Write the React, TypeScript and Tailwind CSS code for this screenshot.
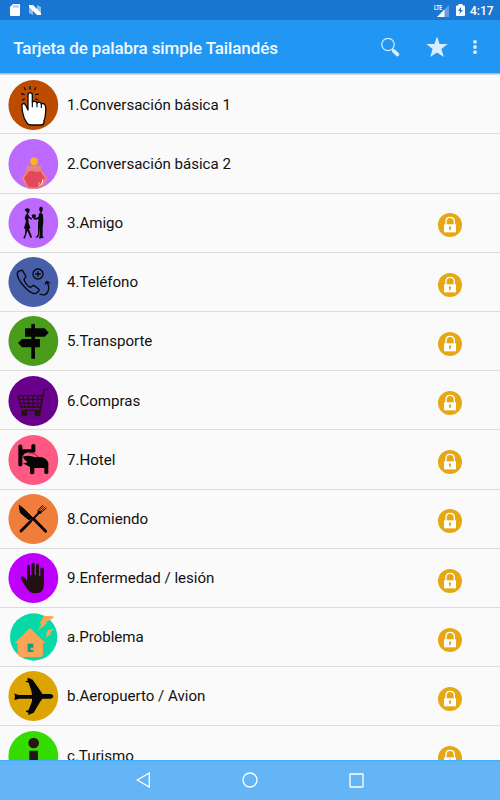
import type { ReactNode } from 'react';

type Item = { label: string; color: string; icon: ReactNode; locked?: boolean; small?: boolean };

const tap = (
  <g strokeLinecap="butt" strokeLinejoin="round">
    <path d="M65 18v11M47 22l5 9M83 22l-5 9M38 41l11 3M92 42l-11 2M41 61l9-5M90 61l-9-5" stroke="#0b0b0b" strokeWidth="3.5" />
    <path d="M59 82V45Q59 38 65.5 38Q72 38 72 45V66Q75 63 80 64Q85 65 86 69Q90 65 95 67Q99 69 99 72Q106 68 110 75Q113 80 112 95Q111 115 107 121V127Q106 135 98 135H68Q58 135 54 126Q46 115 43 98Q40 80 41 74Q45 67 51 74Q54 79 59 90Z" fill="#fff" stroke="#0b0b0b" strokeWidth="4" />
    <path d="M72 65v17M86 69v13M99 72v12" stroke="#0b0b0b" strokeWidth="3.5" />
  </g>
);

const perfume = (
  <g>
    <path d="M55 80H98V97H55Z" fill="#e98580" />
    <path d="M57 90L39 118L58 153H99L118 118L98 90Z" fill="#ea8080" />
    <path d="M60 98Q68 94 77 97Q87 100 96 97L110 118L95 145H61L47 118Z" fill="#e3495a" />
    <path d="M104 121L100 135L91 142" stroke="#fff" strokeWidth="3" fill="none" />
    <path d="M94 130l-4 7" stroke="#fff" strokeWidth="2" />
    <path d="M77 54l11 6v12l-6 7H72l-6-7V60z" fill="#f7b326" />
  </g>
);

const couple = (
  <g fill="#090909">
    <path d="M51 33Q58 28 64 34L63 42L59 47L62 55L72 62L70 65L60 60L61 75L66 89L62 94L71 117L67 121L57 98L51 118L49 122L45 119L50 109L51 94L47 90L53 70L49 60L52 51L57 46L54 41L49 36Z" />
    <path d="M93 29Q98 23 103 29V37L99 44L104 50L105 72L103 88L103 114L106 119L92 122L94 112L95 88L92 112L89 118L81 120L89 109L89 75L91 64L78 65L75 62L90 57L92 47L97 43L93 38Z" />
    <path d="M70 52Q77 45 83 52Q84 59 77 62L72 59Z" />
  </g>
);

const phone = (
  <g fill="none" stroke="#07090d" strokeWidth="4" strokeLinejoin="round" strokeLinecap="round">
    <path d="M30 43L39 40Q42 39 44 43L52 57Q54 61 50 63L47 67Q51 83 66 91L72 87Q75 84 79 87L91 96Q94 99 91 103L83 109Q75 113 58 99Q36 80 28 58Q25 48 30 43Z" />
    <circle cx="89" cy="51" r="15" />
    <path d="M82 51h14M89 44v14" />
    <path d="M95 111Q111 119 119 103Q125 89 115 75M111 81L115 73L124 78" />
  </g>
);

const signs = (
  <g fill="#050505">
    <path d="M69 128V25Q75 21 80 25V128Z" />
    <path d="M50 37H109L121 50L109 62H50Z" />
    <path d="M95 69H41L29 81L41 94H95Z" />
  </g>
);

const cart = (
  <g fill="none" stroke="#24130f" strokeWidth="4">
    <path d="M120 40H107L96 103H39M29 59H101M32 70H101M34 82H99M36 93H97M29 59L38 94M44 59L49 94M59 59L61 94M74 59V94M89 59L86 94" />
    <path d="M103 57L96 103" strokeWidth="5" />
    <circle cx="48" cy="112" r="9.5" fill="#24130f" stroke="none" />
    <circle cx="88" cy="112" r="9.5" fill="#24130f" stroke="none" />
  </g>
);

const bed = (
  <g fill="#050505">
    <path d="M30 32Q36 25 42 32V43H69V31Q75 24 81 30V52Q70 53 60 52L48 56L42 65V91Q35 98 30 91Z" />
    <path d="M43 65Q62 59 80 67Q112 62 120 83V114Q114 121 108 114V99H78V115Q71 121 65 115V96L42 84Q52 86 57 80Q48 75 43 65Z" />
    <path d="M61 54Q80 52 89 66" fill="none" stroke="#171012" strokeWidth="2" />
  </g>
);

const cutlery = (
  <g stroke="#080808" strokeLinecap="round" fill="none">
    <path d="M65 84L38 111" strokeWidth="8.5" />
    <path d="M62 87L94 54" strokeWidth="5.5" />
    <path d="M76 75L112 112" strokeWidth="8.5" />
    <path d="M33 35L36 56L61 77L75 73L47 45Z" fill="#080808" strokeWidth="3" />
    <path d="M89 49L102 35M96 57L114 42" strokeWidth="3" />
    <path d="M92 52L106 37M94 55L110 39" strokeWidth="2" />
    <path d="M89 50Q86 63 97 58L100 55Z" fill="#080808" />
  </g>
);

const palm = (
  <path d="M56 84V41Q56 35 60 35Q65 35 65 41V66H69V34Q69 29 74 29Q79 29 79 34V66H83V37Q83 32 88 32Q92 33 92 38V69H96V48Q97 43 102 44Q107 44 107 50V94Q107 121 82 121Q65 122 55 106L38 79Q36 71 43 70Q48 71 56 84Z" fill="#21120f" />
);

const house = (
  <g fill="#fba456">
    <path d="M65 48L111 93H104V127L99 135H34L28 126V93H19Z" />
    <path d="M58 95H75V120H58Z" fill="#119d83" />
    <path d="M67 107h8v7H67z" fill="#fba456" />
    <path d="M107 11L132 13L138 16L111 32L117 34L87 56L100 37L94 34Z" />
    <path d="M116 55L137 50L126 62L131 63L110 80L117 68L111 66L119 57Z" />
  </g>
);

const plane = (
  <path d="M18 67L23 70L33 72H71L69 59L61 35L52 32V30L59 29L57 25L59 20L73 26L95 58L102 69H127Q138 73 134 79Q132 83 125 83H102L95 93L76 125L60 132V125L53 122V119L61 117L71 91V83H33L18 87L20 76Z" fill="#060606" />
);

const info = (
  <g fill="#271713">
    <circle cx="76" cy="36" r="16" />
    <path d="M63 59H89V130H63Z" />
  </g>
);

const items: Item[] = [
  { label: '1.Conversación básica 1', color: '#bb4c00', icon: tap },
  { label: '2.Conversación básica 2', color: '#bb69ff', icon: perfume },
  { label: '3.Amigo', color: '#bb69ff', icon: couple, locked: true },
  { label: '4.Teléfono', color: '#465fa8', icon: phone, locked: true },
  { label: '5.Transporte', color: '#4a9c1b', icon: signs, locked: true },
  { label: '6.Compras', color: '#69008c', icon: cart, locked: true },
  { label: '7.Hotel', color: '#ff5983', icon: bed, locked: true },
  { label: '8.Comiendo', color: '#ef7d3c', icon: cutlery, locked: true },
  { label: '9.Enfermedad / lesión', color: '#bf00ff', icon: palm, locked: true },
  { label: 'a.Problema', color: '#05d9a7', icon: house, locked: true, small: true },
  { label: 'b.Aeropuerto / Avion', color: '#dba400', icon: plane, locked: true },
  { label: 'c.Turismo', color: '#35dc00', icon: info, locked: true },
];

function Lock() {
  return (
    <svg className="mr-[38px] mt-[5.6px] size-6 shrink-0" viewBox="0 0 72 72">
      <circle cx="36" cy="36" r="36" fill="#e5a812" />
      <path d="M24 37V26Q24 13 36 13Q49 13 49 26V37" fill="none" stroke="#fff" strokeWidth="4" />
      <path d="M18 34H54V58H18Z" fill="#fff" />
      <path d="M36 40a4 4 0 0 1 2 7v5h-4v-5a4 4 0 0 1 2-7" fill="#dba116" />
    </svg>
  );
}

function Row({ item, index }: { item: Item; index: number }) {
  return (
    <li className="flex h-[59.2px] shrink-0 items-center border-b border-[#dcdcdc] pl-2">
      <svg className="mt-[0.6px] size-[50px] shrink-0 overflow-visible" viewBox="-1 0 150 150">
        <clipPath id={`disc-${index}`}>
          <circle cx="75" cy="75" r="75" />
        </clipPath>
        <circle cx={item.small ? 76 : 75} cy="75" r={item.small ? 71 : 74.7} fill={item.color} />
        <g clipPath={item.small ? undefined : `url(#disc-${index})`}>{item.icon}</g>
      </svg>
      <span className="ml-[9px] mt-[0.6px] flex-1 whitespace-nowrap text-[15.1px] leading-5 tracking-[-0.02px] text-[#111]">{item.label}</span>
      {item.locked && <Lock />}
    </li>
  );
}

function StatusBar() {
  return (
    <div className="flex h-5 shrink-0 items-center bg-[#1976d2] text-white">
      <svg className="ml-[10px] h-3 w-[10px]" viewBox="0 0 10 12">
        <path d="M3 0H9Q10 0 10 1V11Q10 12 9 12H1Q0 12 0 11V3Z" fill="#fff" />
        <path d="M4 1.5v2M6 1.5v2M8 1.5v2" stroke="#1976d2" strokeWidth=".8" />
      </svg>
      <svg className="ml-[9px] h-[10px] w-3" viewBox="0 0 12 10">
        <path d="M0 2L4 4V10L0 8ZM8 0L12 2V8L8 6Z" fill="#91bee9" />
        <path d="M1 0H4L12 8V10H8L0 2V0Z" fill="#fff" />
      </svg>
      <svg className="ml-auto h-[13px] w-4" viewBox="0 0 16 13">
        <path d="M3 13L15 1V13Z" fill="#639fdf" />
        <path d="M3 13L10.5 5.5V13Z" fill="#fff" />
        <path d="M0 0H8.5V7H0Z" fill="#1976d2" />
        <text x="0" y="6.3" fontSize="8" fontWeight="700" textLength="8" lengthAdjust="spacingAndGlyphs" fill="#fff">LTE</text>
      </svg>
      <svg className="ml-[6px] h-3 w-[9px]" viewBox="0 0 9 12">
        <path d="M2.5 0h4v1.5H8Q9 1.5 9 2.5V11Q9 12 8 12H1Q0 12 0 11V2.5Q0 1.5 1 1.5H2.5Z" fill="#fff" />
        <path d="M5 3L2 7H4L3.5 10L7 6H5Z" fill="#1976d2" />
      </svg>
      <span className="ml-[5px] mr-[7px] mt-px w-[23px] whitespace-nowrap text-[12px] font-medium leading-5">4:17</span>
    </div>
  );
}

export default function App() {
  return (
    <div className="flex h-[800px] w-[500px] flex-col overflow-hidden bg-[#fafafa] font-['Roboto',sans-serif]">
      <StatusBar />
      <header className="flex h-[53px] shrink-0 items-center bg-[#2196f3] text-[#d9edfd]">
        <h1 className="ml-[13.2px] mt-[2px] whitespace-nowrap text-[17px] font-medium leading-6 tracking-[-0.11px] text-[#f2f9ff]">Tarjeta de palabra simple Tailandés</h1>
        <svg className="ml-auto mr-[26px] h-5 w-5" viewBox="0 0 20 20" fill="none" stroke="currentColor">
          <circle cx="8" cy="7.5" r="6.2" strokeWidth="1.2" />
          <path d="M12 12L14 14" strokeWidth="2" />
          <path d="M14 14.2L17.3 17.4" strokeWidth="3.8" strokeLinecap="round" />
        </svg>
        <svg className="mr-[25px] h-[22px] w-[22px]" viewBox="0 0 22 22">
          <path d="M11 .5L13.6 8H21.7L15.4 12.9L17.8 21L11 16.4L4.2 21L6.6 12.9L.3 8H8.4Z" fill="currentColor" />
        </svg>
        <svg className="mr-[23px] h-4 w-1" viewBox="0 0 4 16" fill="currentColor">
          <circle cx="2" cy="2.8" r="1.9" />
          <circle cx="2" cy="8" r="1.9" />
          <circle cx="2" cy="13.2" r="1.9" />
        </svg>
      </header>
      <div className="h-[2.2px] shrink-0 bg-gradient-to-b from-[#aaa] to-[#e5e5e5]" />
      <ul className="flex min-h-0 flex-1 flex-col overflow-hidden">
        {items.map((item, index) => (
          <Row key={item.label} item={item} index={index} />
        ))}
      </ul>
      <nav className="flex h-10 shrink-0 items-center border-t border-[#42b0fa] bg-[#64b5f6] pb-px">
        <svg className="ml-[136px] h-4 w-[15px]" viewBox="0 0 15 16" fill="none" stroke="white" strokeWidth="1.3">
          <path d="M13.3 1V15L1.3 8Z" />
        </svg>
        <svg className="ml-[91px] h-4 w-4" viewBox="0 0 16 16" fill="none" stroke="white" strokeWidth="1.3">
          <circle cx="8" cy="8" r="7" />
        </svg>
        <svg className="ml-[91px] h-[15px] w-[15px]" viewBox="0 0 15 15" fill="none" stroke="white" strokeWidth="1.3">
          <rect x="1" y="1" width="13" height="13" rx=".5" />
        </svg>
      </nav>
    </div>
  );
}
